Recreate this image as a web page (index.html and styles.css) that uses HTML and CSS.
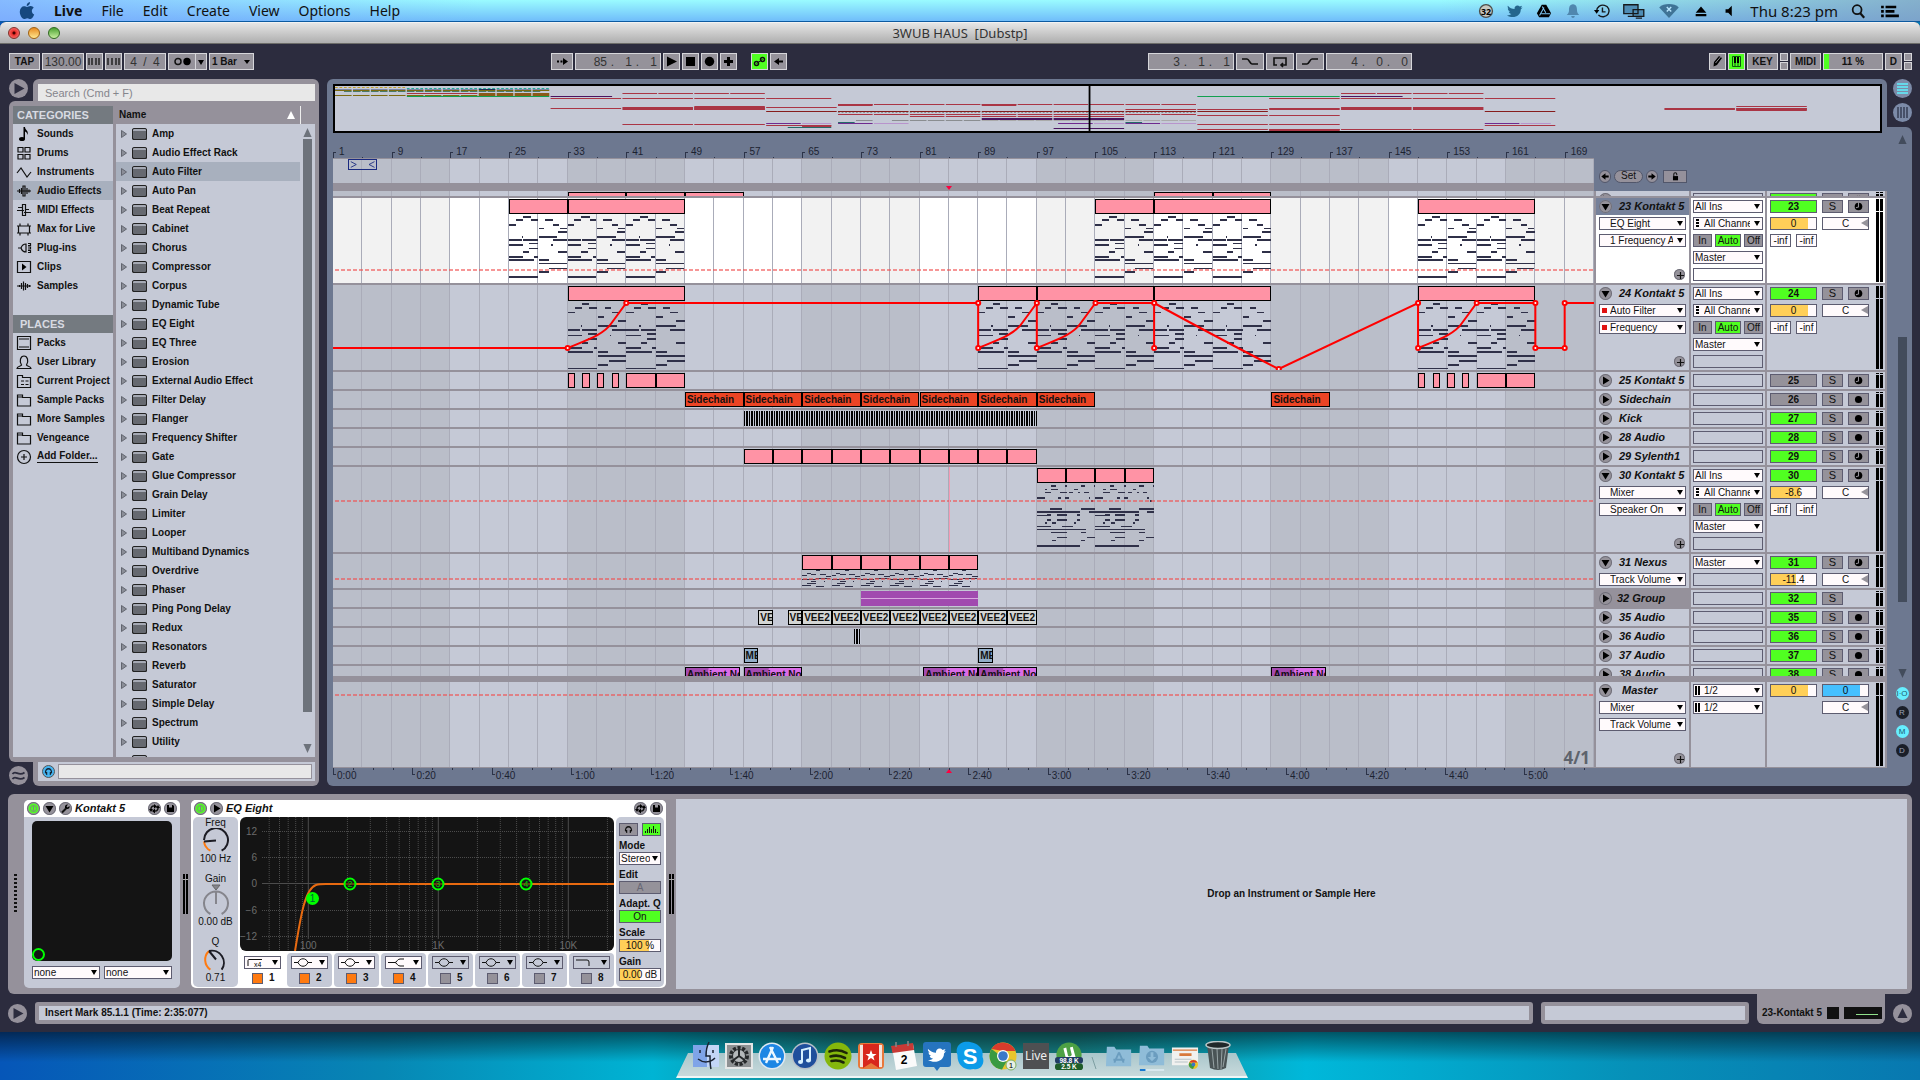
FILE: index.html
```html
<!DOCTYPE html>
<html lang="en">
<head>
<meta charset="utf-8">
<title>3WUB HAUS [Dubstp]</title>
<link rel="stylesheet" href="styles.css">
</head>
<body>
<svg class="defs" aria-hidden="true">
  <symbol id="i-note" viewBox="0 0 16 16"><ellipse cx="6" cy="13" rx="3" ry="2" /><path d="M7.500 1h1.500c0 3 4 3.500 2.500 8-.3-2-1-3-2.500-3.500V13H7.500z"/></symbol>
  <symbol id="i-drums" viewBox="0 0 16 16"><path class="ln" d="M2 2.500h5v4.500H2zM9 2.500h5v4.500H9zM2 9.500h5v4.500H2zM9 9.500h5v4.500H9z"/></symbol>
  <symbol id="i-wave" viewBox="0 0 16 16"><path class="ln" d="M1 9l4-5 6 9 4-5"/></symbol>
  <symbol id="i-audiofx" viewBox="0 0 16 16"><path class="ln" d="M1 8h14M3.500 6v4M5.500 5v6M7 3v10h2V3zM11 5v6M13 6.500v3"/></symbol>
  <symbol id="i-midifx" viewBox="0 0 16 16"><path class="ln" d="M2 5.500h5M1 8.500h7M8 10.500h7M9 7.500h4M6.500 2.500h3v11h-3z"/></symbol>
  <symbol id="i-max" viewBox="0 0 16 16"><path class="ln" d="M2.500 5h11v7h-11zM4 5V2.500M12 5V2.500M4 12v2.500M12 12v2.500M1 5h2M13 5h2M1 12h2M13 12h2"/></symbol>
  <symbol id="i-plug" viewBox="0 0 16 16"><path class="ln" d="M2 8h3M5 8c1-3 2-4 5-4v8c-3 0-4-1-5-4M12 3.500h2.500v2H12M12 7h2.500v2H12M12 10.500h2.500v2H12"/></symbol>
  <symbol id="i-clips" viewBox="0 0 16 16"><path class="ln" d="M1.500 2.500h13v11h-13z"/><path d="M6 4.500l4.500 3.500L6 11.500z"/></symbol>
  <symbol id="i-samples" viewBox="0 0 16 16"><path class="ln" d="M1 8h14M3.500 7v2M5.500 5v6M7.500 3.500v9M9.500 5v7M11.500 6v4M13.500 7v2"/></symbol>
  <symbol id="i-packs" viewBox="0 0 16 16"><path class="ln" d="M1.500 1.500h13v13h-13zM3 4h10M3 12h10"/></symbol>
  <symbol id="i-user" viewBox="0 0 16 16"><path class="ln" d="M1 14.500c0-2.500 4-2 4.500-3.500C3 7 4.500 2 8 2s5 5 2.500 9c.5 1.500 4.500 1 4.500 3.500z"/></symbol>
  <symbol id="i-project" viewBox="0 0 16 16"><path class="ln" d="M1.500 14.500V2.500h5v2h8v10zM5 8h3M5 11.500h3M9.500 8h3M9.500 11.500h3"/></symbol>
  <symbol id="i-folder" viewBox="0 0 16 16"><path class="ln" d="M1.500 14V3h5v2.500h8V14zM1.500 5h5"/></symbol>
  <symbol id="i-add" viewBox="0 0 16 16"><circle class="ln" cx="8" cy="8" r="6.500"/><path class="ln" d="M8 5v6M5 8h6"/></symbol>
  <symbol id="i-right" viewBox="0 0 13 13"><path d="M4 2.500l6.500 4-6.500 4z"/></symbol>
  <symbol id="i-down" viewBox="0 0 13 13"><path d="M2.500 4h8l-4 6.500z"/></symbol>
  <symbol id="i-swap" viewBox="0 0 13 13"><path d="M3 8C2.500 5 4.500 3.500 6.500 4M10 5c.5 3-1.500 4.500-3.500 4" fill="none" stroke="#111" stroke-width="1.500"/><path d="M6 2l3 2.500-3 2zM7 6.500v5L4 9zM1 7h4L3 10zM8 6h4l-2-3z"/></symbol>
  <symbol id="i-save" viewBox="0 0 13 13"><path d="M3 3h6l1 1v6H3z"/><path d="M5 3h3v2.500H5z" fill="#95929a"/></symbol>
  <symbol id="i-wrench" viewBox="0 0 13 13"><path d="M3 10.500l4-4" stroke="#111" stroke-width="2"/><path d="M6 6c-.5-2 1-4 3-3.500L7.500 4.500l1 1L10.500 4c.5 2-1 3.500-3 3z"/></symbol>
  <symbol id="i-power" viewBox="0 0 13 13"><circle cx="6.500" cy="6.500" r="5" fill="#4fff21"/><circle cx="6.500" cy="6.500" r="3" fill="none" stroke="#7a8f7a"/><path d="M6.500 4v5" stroke="#7a8f7a"/></symbol>
  <symbol id="i-tie" viewBox="0 0 13 13"><circle cx="6.500" cy="6.500" r="4.500"/><path d="M6.500 1v6l-3 1" fill="none" stroke="#95929a" stroke-width="1.300"/></symbol>
  <symbol id="i-phones" viewBox="0 0 13 13"><path d="M3 8.500C2 1.500 11 1.500 10 8.500" fill="none" stroke="currentColor" stroke-width="1.500"/><path d="M2.500 7h2.500v3.500H4zM8 7h2.500L9 10.500H8z" fill="currentColor"/></symbol>
</svg>

<nav class="menubar" aria-label="System menu">
  <div class="menus">
    <a class="apple" href="#" aria-label="Apple"><svg viewBox="0 0 16 18"><path fill="#16487f" d="M11 0c.2 2-1.500 4-3.300 4C7.500 2 9.200.3 11 0zM8 5c.8 0 2-1 3.700-.9 1.300.1 2.400.7 3 1.700-2.800 1.800-2.200 5.600.5 6.700C14.500 14.500 13 17 11.500 17c-1.300 0-1.700-.8-3.200-.8s-2 .8-3.200.8C3 17 .6 12.800.8 9.600 1 6.200 3 4.300 5 4.300 6.300 4.300 7.300 5 8 5z"/></svg></a>
    <a href="#" class="app">Live</a><a href="#">File</a><a href="#">Edit</a><a href="#">Create</a><a href="#">View</a><a href="#">Options</a><a href="#">Help</a>
  </div>
  <div class="extras">
    <svg viewBox="0 0 18 18"><circle cx="9" cy="9" r="8" fill="#4c4c48"/><circle cx="9" cy="9" r="6.500" fill="#c8c8c0"/><text x="9" y="13" text-anchor="middle" font-size="10" font-weight="bold">32</text></svg>
    <svg viewBox="0 0 18 18"><path fill="#25668c" d="M1 3c2 2.500 4.500 3.500 7.500 3.700C8 3.500 12 1.300 14.300 4L17 3l-1.500 2.500 2-.5-2 2.300C15.500 15 7 18 0 14c2 0 4-.5 5-1.500C3.500 12.300 2.200 11 2 9.800h1.500C1.800 9 .8 7.500 1 6l1.300.5C.8 5.500.3 4.200 1 3z"/></svg>
    <svg viewBox="0 0 18 18"><path d="M6.500 2h5l5.500 9.500-2.500 4.500h-11L1 11.500z"/><path d="M7 4l4 7M6 12h10M9 5l-5 9" stroke="#7ec6f2" stroke-width="1.200"/></svg>
    <svg viewBox="0 0 18 18"><path fill="#5087ae" d="M9 1.500c4 .5 4.500 3.500 4.500 7 0 2 1 3.500 2.500 5H2c1.500-1.500 2.500-3 2.500-5 0-3.500.5-6.500 4.500-7zM7 14.500h4c0 3-4 3-4 0z"/></svg>
    <svg viewBox="0 0 18 18"><path fill="none" stroke="#16191c" stroke-width="1.600" d="M3 9a7 6.500 0 1 1 2 4.500M9.500 5v5h3.500"/><path d="M0 8h6L3 12z"/></svg>
    <svg viewBox="0 0 26 18" class="wide"><path fill="#4f8db5" stroke="#16191c" stroke-width="1.500" d="M1.500 2h16v10h-16zM12 7.500h12v7.500H12z"/><path d="M6 15h6M15 17h7" stroke="#16191c" stroke-width="1.500"/></svg>
    <svg viewBox="0 0 22 18" class="wide"><path fill="#3f7396" d="M0 5c5-5 17-5 22 0L11 17z"/><path stroke="#b8e6ff" stroke-width="1.600" d="M8.500 4.500l5 5M13.500 4.500l-5 5"/></svg>
    <svg viewBox="0 0 18 18"><path d="M9 4l6 7H3zM3 12.500h12v2.500H3z"/></svg>
    <svg viewBox="0 0 18 18"><path d="M4 7h3l4-4v12l-4-4H4z"/></svg>
    <time>Thu 8:23 pm</time>
    <svg viewBox="0 0 18 18"><circle cx="8" cy="7.500" r="5" fill="none" stroke="#111" stroke-width="2"/><path d="M11 11l5 5.500" stroke="#111" stroke-width="2.500"/></svg>
    <svg viewBox="0 0 22 18" class="wide"><path d="M1 3h3v3H1zM6 3h12v3H6zM1 8h3v3H1zM6 8h10v3H6zM1 13h3v3H1zM6 13h15v3H6z"/></svg>
  </div>
</nav>

<main class="window">
  <header class="titlebar">
    <div class="lights"><button class="close" aria-label="Close"></button><button class="mini" aria-label="Minimize"></button><button class="full" aria-label="Zoom"></button></div>
    <h1>3WUB HAUS &nbsp;[Dubstp]</h1>
  </header>

  <div class="controlbar">
    <div class="cluster">
      <button class="btn w31">TAP</button>
      <button class="btn w42 num">130.00</button>
      <button class="btn" aria-label="Nudge down"><svg viewBox="0 0 15 15"><path d="M2 4v7M5 4v7M9 4v7M12 4v7" stroke="#111" stroke-width="1.300"/></svg></button>
      <button class="btn" aria-label="Nudge up"><svg viewBox="0 0 15 15"><path d="M2 4v7M6 4v7M10 4v7M13 4v7" stroke="#111" stroke-width="1.300"/></svg></button>
      <button class="btn w42 num sig"><span>4</span><span>/</span><span>4</span></button>
      <div class="joined"><button class="btn w28" aria-label="Metronome"><svg class="s24" viewBox="0 0 24 15"><circle cx="8" cy="7.500" r="3" fill="none" stroke="#111" stroke-width="1.500"/><circle cx="17" cy="7.500" r="3.700"/></svg></button><button class="btn w12" aria-label="Metronome options"><svg class="s8" viewBox="0 0 8 8"><path d="M1 2h6L4 7z"/></svg></button></div>
      <button class="btn w45">1 Bar<svg class="s8" viewBox="0 0 8 8"><path d="M1 2h6L4 6z"/></svg></button>
    </div>
    <div class="centre">
      <div class="cluster">
        <button class="btn w22" aria-label="Follow"><svg viewBox="0 0 15 15"><path d="M2 6.500h2v2H2zM5.500 6.500h2v2h-2zM8 4l5 3.500L8 11z"/></svg></button>
        <output class="btn pos"><span>85</span><i>.</i><span>1</span><i>.</i><span>1</span></output>
        <button class="btn" aria-label="Play"><svg viewBox="0 0 15 15"><path d="M3 2.500l10 5-10 5z"/></svg></button>
        <button class="btn" aria-label="Stop"><svg viewBox="0 0 15 15"><path d="M3 3h9v9H3z"/></svg></button>
        <button class="btn" aria-label="Record"><svg viewBox="0 0 15 15"><circle cx="7.500" cy="7.500" r="4.700"/></svg></button>
        <button class="btn" aria-label="Overdub"><svg viewBox="0 0 15 15"><path d="M6 3h3v3h3v3H9v3H6V9H3V6h3z"/></svg></button>
        <button class="btn on gapl" aria-label="Automation arm"><svg viewBox="0 0 15 15"><path d="M4.500 9.500l6-4" stroke="#111"/><circle cx="4.500" cy="9.500" r="2" fill="none" stroke="#111" stroke-width="1.500"/><circle cx="10.500" cy="5.500" r="2" fill="none" stroke="#111" stroke-width="1.500"/></svg></button>
        <button class="btn" aria-label="Back to arrangement"><svg viewBox="0 0 15 15"><path d="M3 7.500L8 4v2.500h4v2H8V11z"/></svg></button>
      </div>
      <div class="cluster">
        <output class="btn pos"><span>3</span><i>.</i><span>1</span><i>.</i><span>1</span></output>
        <button class="btn w28" aria-label="Punch in"><svg class="s24" viewBox="0 0 24 15"><path class="ln2" d="M4 5h5c2 0 3 5 5 5h6"/></svg></button>
        <button class="btn w28" aria-label="Loop"><svg class="s24" viewBox="0 0 24 15"><path class="ln2" d="M9 11H6V4h12v7h-5M15 9l-2 2 2 2"/></svg></button>
        <button class="btn w28" aria-label="Punch out"><svg class="s24" viewBox="0 0 24 15"><path class="ln2" d="M4 10h5c2 0 3-5 5-5h6"/></svg></button>
        <output class="btn pos"><span>4</span><i>.</i><span>0</span><i>.</i><span>0</span></output>
      </div>
    </div>
    <div class="cluster">
      <button class="btn" aria-label="Draw mode"><svg viewBox="0 0 15 15"><path d="M4 8l5-6 3 2-5 7-3.500 1.500z"/><path d="M5.500 9l5-6" stroke="#95929a"/></svg></button>
      <button class="btn on" aria-label="Computer keyboard"><svg viewBox="0 0 15 15"><path d="M3.500 2.500h8v10h-8zM6 2.500v10M9 2.500v10" fill="none" stroke="#115511"/><path d="M5 3h2v6H5zM8 3h2v6H8z"/></svg></button>
      <button class="btn w31">KEY</button>
      <span class="leds"><i></i><i></i></span>
      <button class="btn w31">MIDI</button>
      <span class="btn cpu">11 %</span>
      <button class="btn">D</button>
      <span class="leds"><i></i><i></i></span>
    </div>
  </div>

  <div class="workspace">
    <aside class="browser">
      <div class="tab top">
        <button class="round" aria-label="Hide browser"><svg viewBox="0 0 19 19"><path d="M5.500 4l10 5.500-10 5.500z"/></svg></button>
        <div class="tabbody"><input class="search" type="search" placeholder="Search (Cmd + F)" aria-label="Search"></div>
      </div>
      <div class="columns">
        <nav class="cats" aria-label="Categories">
          <h2>CATEGORIES</h2>
          <ul>
            <li><a href="#"><svg><use href="#i-note"/></svg>Sounds</a></li>
            <li><a href="#"><svg><use href="#i-drums"/></svg>Drums</a></li>
            <li><a href="#"><svg><use href="#i-wave"/></svg>Instruments</a></li>
            <li><a href="#" class="sel"><svg><use href="#i-audiofx"/></svg>Audio Effects</a></li>
            <li><a href="#"><svg><use href="#i-midifx"/></svg>MIDI Effects</a></li>
            <li><a href="#"><svg><use href="#i-max"/></svg>Max for Live</a></li>
            <li><a href="#"><svg><use href="#i-plug"/></svg>Plug-ins</a></li>
            <li><a href="#"><svg><use href="#i-clips"/></svg>Clips</a></li>
            <li><a href="#"><svg><use href="#i-samples"/></svg>Samples</a></li>
          </ul>
          <h2 class="places">PLACES</h2>
          <ul>
            <li><a href="#"><svg><use href="#i-packs"/></svg>Packs</a></li>
            <li><a href="#"><svg><use href="#i-user"/></svg>User Library</a></li>
            <li><a href="#"><svg><use href="#i-project"/></svg>Current Project</a></li>
            <li><a href="#"><svg><use href="#i-folder"/></svg>Sample Packs</a></li>
            <li><a href="#"><svg><use href="#i-folder"/></svg>More Samples</a></li>
            <li><a href="#"><svg><use href="#i-folder"/></svg>Vengeance</a></li>
            <li><a href="#"><svg><use href="#i-add"/></svg><span class="add">Add Folder...</span></a></li>
          </ul>
        </nav>
        <section class="files">
          <h2><span>Name</span><svg class="sort" viewBox="0 0 8 8"><path fill="#fff" d="M4 0l4 8H0z"/></svg></h2>
          <div class="filebody">
            <ul id="effects"></ul>
            <div class="scroll"><svg viewBox="0 0 9 10"><path d="M4.500 0L9 10H0z"/></svg><i></i><svg viewBox="0 0 9 10"><path d="M0 0h9L4.500 10z"/></svg></div>
          </div>
        </section>
      </div>
      <div class="tab bottom">
        <button class="round" aria-label="Groove pool"><svg viewBox="0 0 19 19"><path d="M3.500 8c3-4.500 6 3 12-1.500M3.500 13c3-4.500 6 3 12-1.500" fill="none" stroke="#2c2c3e" stroke-width="1.800"/></svg></button>
        <div class="tabbody"><div class="preview"><button class="cue" aria-label="Preview"><svg viewBox="0 0 13 13"><use href="#i-phones"/></svg></button><input aria-label="Preview waveform"></div></div>
      </div>
    </aside>

    <section class="arranger">
      <div class="stage">
        <svg id="overview" class="overview" viewBox="0 0 172 45" preserveAspectRatio="none"></svg>
        <div class="rulerrow">
          <div class="rulers">
            <div class="ruler" id="bars"></div>
            <div class="looplane striped"><div class="brace"><svg viewBox="0 0 30 11" preserveAspectRatio="none"><path d="M2 2l6 3.500-6 3.500M28 2l-6 3.500 6 3.500" fill="none" stroke="#1a2a80"/></svg></div></div>
            <div class="scrub"><i class="insert"></i></div>
          </div>
          <div class="locators">
            <button class="pill" aria-label="Previous locator"><svg viewBox="0 0 13 13"><path d="M2.500 6.500L7 3v2.500h3.500v2H7V10z"/></svg></button>
            <button class="pill set">Set</button>
            <button class="pill" aria-label="Next locator"><svg viewBox="0 0 13 13"><path d="M10.500 6.500L6 3v2.500H2.500v2H6V10z"/></svg></button>
            <button class="lock" aria-label="Lock envelopes"><svg viewBox="0 0 13 13"><path d="M3.500 6h6v5h-6z"/><path d="M4.500 6V3.500c0-2 3.500-2 3.500 0V5" fill="none" stroke="#111" stroke-width="1.200"/></svg></button>
          </div>
        </div>
        <div id="tracks" class="tracks"></div>
        <div class="ruler time" id="seconds"></div>
      </div>
      <div class="side">
        <div class="views">
          <button class="round cyan" aria-label="Arrangement view"><svg viewBox="0 0 19 19"><path d="M4 5h11M4 8h11M4 11h11M4 14h11" stroke="#5ff2ff" stroke-width="1.600"/></svg></button>
          <button class="round cyan" aria-label="Session view"><svg viewBox="0 0 19 19"><path d="M5 4v11M8 4v11M11 4v11M14 4v11" stroke="#2c3348" stroke-width="1.300"/></svg></button>
        </div>
        <div class="rail">
          <svg viewBox="0 0 9 10"><path d="M4.500 0L9 10H0z"/></svg>
          <i class="thumb"></i>
          <svg viewBox="0 0 9 10"><path d="M0 0h9L4.500 10z"/></svg>
          <button class="opt lit">I·O</button><button class="opt">R</button><button class="opt lit">M</button><button class="opt">D</button>
        </div>
      </div>
    </section>
  </div>

  <section class="detail">
    <div class="drag"></div>
    <article class="device kontakt">
      <header><svg class="dot"><use href="#i-power"/></svg><svg class="dot"><use href="#i-down"/></svg><svg class="dot"><use href="#i-wrench"/></svg><h3>Kontakt 5</h3><svg class="dot"><use href="#i-swap"/></svg><svg class="dot"><use href="#i-save"/></svg></header>
      <div class="pad"><i></i></div>
      <div class="pair"><span class="pick"><select aria-label="X axis"><option>none</option></select></span><span class="pick"><select aria-label="Y axis"><option>none</option></select></span></div>
    </article>
    <div class="vu"></div>
    <article class="device eq">
      <header><svg class="dot"><use href="#i-power"/></svg><svg class="dot"><use href="#i-right"/></svg><h3>EQ Eight</h3><svg class="dot"><use href="#i-swap"/></svg><svg class="dot"><use href="#i-save"/></svg></header>
      <div class="eqbody">
        <div class="knobs">
          <div>Freq<svg viewBox="0 0 32 25"><path d="M10.400 22.700A12 12 0 0 1 4 13.500" class="amt"/><path d="M4 12a12 12 0 1 1 17.600 10.700M16 12.500L4 13.500" class="arc"/></svg>100 Hz</div>
          <div>Gain<svg viewBox="0 0 32 32" class="tall"><path d="M12 1h8l-4 5z" fill="#85858c" stroke="#666"/><path d="M10.400 30A12 12 0 1 1 21.600 30M16 7v13" class="arc off"/></svg>0.00 dB</div>
          <div>Q<svg viewBox="0 0 32 25"><path d="M10.400 22.700A12 12 0 0 1 9 4" class="amt"/><path d="M9 4a12 12 0 0 1 12.600 18.700M16 12.500L9 4" class="arc"/></svg>0.71</div>
        </div>
        <div class="eqmid">
          <svg id="curve" class="curve" viewBox="0 0 374 134"></svg>
          <div class="bands" id="bands"></div>
        </div>
        <div class="eqside">
          <div class="duo"><button class="mini-btn" aria-label="Audition"><svg viewBox="0 0 13 13"><use href="#i-phones"/></svg></button><button class="mini-btn on" aria-label="Analyze"><svg viewBox="0 0 17 11"><path d="M2.500 9V7M4.500 9V5M6.500 9V3M8.500 9V5M10.500 9V2M12.500 9V5M14.500 9V8" stroke="#111"/></svg></button></div>
          <label>Mode<span class="pick"><select><option>Stereo</option></select></span></label>
          <label>Edit<button class="mini-btn dim">A</button></label>
          <label>Adapt. Q<button class="mini-btn on">On</button></label>
          <label>Scale<input class="val" style="--fill:73%" value="100 %"></label>
          <label>Gain<input class="val" style="--fill:50%" value="0.00 dB"></label>
        </div>
      </div>
    </article>
    <div class="vu"></div>
    <div class="drop">Drop an Instrument or Sample Here</div>
  </section>

  <footer class="status">
    <button class="round" aria-label="Help view"><svg viewBox="0 0 19 19"><path d="M5.500 4l10 5.500-10 5.500z"/></svg></button>
    <div class="field msg">Insert Mark 85.1.1 (Time: 2:35:077)</div>
    <div class="field cliptab"></div>
    <div class="current">23-Kontakt 5<i class="thumb1"></i><i class="thumb2"></i></div>
    <button class="round" aria-label="Hide detail"><svg viewBox="0 0 19 19"><path d="M9.500 4l5 10h-10z"/></svg></button>
  </footer>
</main>

<nav class="dock" aria-label="Dock">
  <div class="shelf">
    <svg viewBox="0 0 28 30"><path fill="#7fa4e8" d="M1 4h26v22H1z"/><path fill="#c3d6f7" d="M15 4h12v22H15z"/><path d="M17 1c-3 6-3 9-3 14h4c0 5 0 9 1 13M8 9v3M21 9v3M6 18c5 4 12 4 17-1" fill="none" stroke="#1b2333" stroke-width="1.500"/></svg>
    <svg viewBox="0 0 28 30"><path fill="#8e9193" stroke="#e4e6e6" stroke-width="2" d="M1 3h26v24H1z"/><circle cx="14" cy="15" r="8" fill="none" stroke="#26282a" stroke-width="4" stroke-dasharray="3 1.500"/><circle cx="14" cy="15" r="6.500" fill="#b5b8ba" stroke="#26282a"/><path d="M14 15V8.500M14 15l5.500 4M14 15l-5.500 4" stroke="#26282a" stroke-width="2"/></svg>
    <svg viewBox="0 0 28 30"><circle cx="14" cy="15" r="13.500" fill="#dfe9f2"/><circle cx="14" cy="15" r="12" fill="#1d86e4"/><path d="M15 6L8 22M12 6l8 16M5 18h18" stroke="#eaf6ff" stroke-width="2.400"/></svg>
    <svg viewBox="0 0 28 30"><circle cx="14" cy="15" r="13.500" fill="#b7c0c8"/><circle cx="14" cy="15" r="12" fill="#1f4f9c"/><path d="M11 21V9l8-2v12" fill="none" stroke="#d7f0ff" stroke-width="2"/><ellipse cx="9.500" cy="21" rx="2.500" ry="2" fill="#d7f0ff"/><ellipse cx="17.500" cy="19.500" rx="2.500" ry="2" fill="#d7f0ff"/></svg>
    <svg viewBox="0 0 28 30"><circle cx="14" cy="15" r="13.500" fill="#85b70c"/><path d="M5.500 10.500c6-2 12-1.500 17 1.500M6.500 15.500c5-1.500 10-1 14.500 1.500M7.500 20c4-1 8-.8 12 1.500" fill="none" stroke="#1d2607" stroke-width="2.600" stroke-linecap="round"/></svg>
    <svg viewBox="0 0 28 30"><rect x="1" y="2" width="26" height="26" rx="4" fill="#e8783b"/><path fill="#d8261c" d="M6 3h16v24l-8-5-8 5z"/><path fill="#f4e3dc" d="M3 4h3v22H3zM22 4h3v22h-3z"/><path fill="#fff" d="M14 9l1.500 4h4l-3.200 2.500 1.200 4L14 17l-3.500 2.500 1.200-4L8.500 13h4z"/></svg>
    <svg viewBox="0 0 28 30"><path fill="#fafafa" d="M2 6l21-3 4 22-21 4z"/><path fill="#c83a36" d="M1 5l22-3 1 7L2.500 12z"/><path d="M6 1v5M18 0v5" stroke="#888" stroke-width="1.500"/><text x="14" y="23" text-anchor="middle" font-size="12" font-weight="bold">2</text></svg>
    <svg viewBox="0 0 28 30"><path fill="#2674bf" d="M3 1h22q3 0 3 3v19q0 3-3 3h-8l-3 4-3-4H3q-3 0-3-3V4q0-3 3-3z"/><path fill="#fff" d="M5 8c2.500 2.500 5 3.500 8 3.700C12.500 8 17 6 19.500 9l3-1-1.500 2.500 2-.3-2 2.200C21 20 12 23 5 19c2 0 4-.5 5-1.500-2-.3-3-1-3.300-2.500h1.500C6.500 14 5.500 13 5.600 11.200l1.300.4C5.500 10.500 4.500 9.500 5 8z"/></svg>
    <svg viewBox="0 0 28 30"><path fill="#0c9be8" d="M8 1c4-1 14 0 18 8 1 3 .5 5 .5 7 3 6-2 14-9 12C9 30 1 24 1.500 14-1 9 2 2 8 1z"/><text x="14" y="23" text-anchor="middle" font-size="22" font-weight="bold" fill="#fff">S</text></svg>
    <svg viewBox="0 0 28 30"><circle cx="14" cy="15" r="13.500" fill="#e9c52c"/><path fill="#d93c2c" d="M2.500 8A13.500 13.500 0 0 1 26.500 10H14z"/><path fill="#3a9a42" d="M2.500 8A13.500 13.500 0 0 0 13 28.500l5-9z"/><circle cx="14" cy="15" r="6" fill="#fff"/><circle cx="14" cy="15" r="4.800" fill="#3b78c8"/><circle cx="22" cy="24" r="5" fill="#e8efe4" stroke="#7fae62"/><text x="22" y="27" text-anchor="middle" font-size="8">1</text></svg>
    <svg viewBox="0 0 28 30"><path fill="#4e5052" d="M1 2h26v26H1z"/><text x="14" y="19" text-anchor="middle" font-size="12" fill="#eee" class="noto">Live</text></svg>
    <svg viewBox="0 0 30 30"><circle cx="15" cy="14" r="13.500" fill="#4da144"/><path fill="#fff" d="M9 7l3-1 2 9c2 1 3 0 4-1L16 6l3-1 3 11-10 3z"/><rect y="16" width="30" height="7" rx="3" fill="#223d63"/><rect y="23" width="30" height="7" rx="3" fill="#1f5d2a"/><text x="15" y="22" text-anchor="middle" font-size="7" font-weight="bold" fill="#fff">98.8 K</text><text x="15" y="29" text-anchor="middle" font-size="7" font-weight="bold" fill="#fff">2.5 K</text></svg>
    <svg viewBox="0 0 12 30" class="rule"><path d="M4 16l4 12" stroke="#7d9ea2"/></svg>
    <svg viewBox="0 0 30 30"><path fill="#8fbcd8" d="M2 5h8l2 3h16v18H1z"/><path d="M15 11l-5 11M15 11l5 11M9 19h12" stroke="#6b9dbf" stroke-width="2" fill="none"/></svg>
    <svg viewBox="0 0 30 32"><path fill="#8fbcd8" d="M2 5h8l2 3h16v18H1z"/><circle cx="15" cy="17" r="6.500" fill="#6b9dbf"/><path fill="#8fbcd8" d="M13.500 12h3v5h3L15 21.500 10.500 17h3z"/><path fill="#d8e8ee" d="M2 30h26v2H2z"/><path fill="#1878d0" d="M2 30h6v2H2z"/></svg>
    <svg viewBox="0 0 30 30"><path fill="#f1f1ef" d="M1 6h28v19H1z"/><path fill="#d8793c" d="M2 8h26v1.500H2zM9 12h13v3H9z"/><path fill="#b8c4c8" d="M4 18h18v1H4zM4 21h14v1H4z"/><circle cx="24" cy="24" r="5" fill="#e9c52c"/><path fill="#d93c2c" d="M19.500 22a5 5 0 0 1 9 0z"/><path fill="#3a9a42" d="M19.500 22a5 5 0 0 0 4 7l2-4z"/><circle cx="24" cy="24" r="2" fill="#3b78c8"/></svg>
    <svg viewBox="0 0 28 30"><path fill="#4a5456" d="M3 4h22l-3 23q-8 4-16 0z"/><path d="M8 8l2 19M13 8l1 20M18 8l-1 20M22 8l-3 18" stroke="#98a4a6"/><ellipse cx="14" cy="4" rx="12" ry="3.500" fill="#20282a" stroke="#b9c6c8" stroke-width="1.500"/></svg>
  </div>
</nav>
<script src="app.js"></script>
</body>
</html>
```
FILE: styles.css
```css
:root {
  --night: #2c2c3e;
  --frame: #95919b;
  --slate: #6d7890;
  --pale: #c5c9d6;
  --pale2: #babec9;
  --edge: #5d5c70;
  --lime: #50ff21;
  --paper: #fffafc;
  --bar: calc(100% / 43);
  --stripe: calc(400% / 43);
}
* { box-sizing: border-box; }
body {
  margin: 0;
  min-height: 100vh;
  display: flex;
  flex-direction: column;
  font: 10px/12px "Liberation Sans", Arial, sans-serif;
  color: #111;
  background: linear-gradient(90deg, #0656b8 0, #0787b4 20%, #00b4d4 34%, #16868c 44%, #16868c 56%, #00b8da 68%, #0690b8 85%, #0878b0);
}
button, input, select { font: inherit; color: inherit; padding: 0; margin: 0; border: 0; border-radius: 0; background: none; }
h1, h2, h3, ul { margin: 0; padding: 0; font-size: inherit; list-style: none; }
a { color: inherit; text-decoration: none; }
svg { display: block; flex: none; }
.defs { display: none; }
.ln { fill: none; stroke: #111; stroke-width: 1.2; }
.ln2 { fill: none; stroke: #111; stroke-width: 1.6; }
.noto { font-family: "Noto Sans", sans-serif; }

/* system menu */
.menubar {
  display: flex; justify-content: space-between; align-items: center;
  height: 22px; padding: 0 18px 0 19px;
  font: 14px/20px "Noto Sans", sans-serif;
  border-bottom: 1px solid #0d5aa0;
  background: linear-gradient(90deg, #80aaffcc, #80aaff00 25%, #80aaff00 75%, #7f9dbfcc), linear-gradient(#9afbff, #70bdfa);
}
.menus, .extras { display: flex; align-items: center; }
.menus { gap: 19px; }
.menus .app { font-weight: bold; }
.apple svg { width: 16px; height: 18px; }
.extras { gap: 11px; }
.extras time { font-size: 15px; }
.extras svg { width: 18px; height: 16px; }
.extras .wide { width: 24px; }

/* window */
.window { background: var(--night); display: flex; flex-direction: column; border-radius: 6px 6px 0 0; padding-bottom: 8px; }
.titlebar {
  display: grid; grid-template-columns: 60px 1fr 60px; align-items: center;
  height: 22px; padding: 0 8px; border-radius: 6px 6px 0 0;
  background: linear-gradient(#e6e6e6, #aeaeae); border-top: 1px solid #f2f2f2; border-bottom: 1px solid #6c6c68;
}
.titlebar h1 { font: 13px/20px "Noto Sans", sans-serif; color: #333; text-align: center; }
.lights { display: flex; gap: 8px; }
.lights button { width: 12px; height: 12px; border-radius: 50%; border: 1px solid #803028; }
.close { background: radial-gradient(#400 0 1px, #e8302a 2px, #f88); }
.lights .mini { background: linear-gradient(#e88a20, #ffe890); border-color: #a06010; }
.lights .full { background: linear-gradient(#4aa030, #c8f0a0); border-color: #306820; }

.controlbar { display: flex; justify-content: space-between; padding: 9px 8px 9px 9px; }
.cluster { display: flex; gap: 2px; }
.centre { display: flex; gap: 18.8vw; }
.btn {
  display: flex; align-items: center; justify-content: center;
  width: 17px; height: 17px; border: 1px solid #d6d6da; background: #95929a; font-weight: bold;
}
.btn svg { width: 15px; height: 15px; }
.btn .s8 { width: 8px; height: 8px; }
.btn .s24 { width: 24px; }
.btn.on { background: var(--lime); }
.w12 { width: 12px; } .w22 { width: 22px; } .w28 { width: 28px; } .w31 { width: 31px; } .w42 { width: 42px; }
.w45 { width: 45px; gap: 6px; }
.joined { display: flex; }
.joined .w12 { border-left: 0; width: 11px; }
.num, .pos { font-size: 12px; font-weight: normal; color: #333; }
.sig { justify-content: space-around; padding: 0 2px; }
.pos { width: 86px; justify-content: flex-end; padding-right: 3px; }
.pos span { width: 18px; text-align: right; }
.pos i { width: 7px; text-align: right; font-style: normal; }
.gapl { margin-left: 12px; }
.leds { display: flex; flex-direction: column; gap: 1px; width: 8px; }
.leds i { flex: 1; border: 1px solid #d6d6da; background: #95929a; }
.cpu { width: 60px; background: linear-gradient(90deg, var(--lime) 5px, #95929a 5px); }

.workspace { display: grid; grid-template-columns: 310px 1fr; gap: 8px; padding: 0 8px 0 9px; }

/* browser */
.browser { display: flex; flex-direction: column; }
.tab { display: flex; }
.round { width: 19px; height: 19px; border-radius: 50%; background: var(--frame); flex: none; }
.round svg { width: 19px; height: 19px; fill: var(--night); }
.tab .round { margin-right: 5px; }
.top .tabbody { flex: 1; background: var(--frame); border-radius: 6px 6px 0 0; padding: 5px 4px 0 5px; }
.bottom .tabbody { flex: 1; background: var(--frame); border-radius: 0 0 6px 6px; padding: 0 4px 5px 5px; }
.bottom { align-items: flex-end; }
.bottom .round { margin-bottom: 1px; }
.search { display: block; width: 100%; height: 17px; padding: 0 7px; background: #e8e8e8; font-size: 11px; appearance: none; }
.search::placeholder { color: #85858c; opacity: 1; }
.columns { flex: 1; display: grid; grid-template-columns: 100px 1fr; gap: 3px; background: var(--frame); padding: 5px 4px; border-radius: 6px 0 0 6px; }
.cats { background: var(--pale); }
.cats h2 { height: 18px; line-height: 18px; padding-left: 4px; background: #747a80; color: #d8dae2; font-size: 11px; font-weight: bold; }
.cats .places { margin-top: 20px; padding-left: 7px; }
.cats a { display: flex; align-items: center; gap: 5px; height: 19px; padding-left: 3px; font-weight: bold; white-space: nowrap; }
.cats svg { width: 16px; height: 16px; }
.cats .sel, .files .sel { background: #a8b0be; }
.add { border-bottom: 1px solid #111; }
.files { display: flex; flex-direction: column; }
.files h2 { display: flex; justify-content: space-between; align-items: center; height: 18px; padding-left: 3px; margin-right: 14px; border-right: 1px solid #eee; }
.sort { width: 8px; height: 8px; margin-right: 5px; }
.filebody { flex: 1; display: flex; background: var(--pale); contain: size; overflow: hidden; }
.filebody ul { flex: 1; overflow: hidden; }
.filebody li { display: flex; align-items: center; gap: 5px; height: 19px; padding-left: 5px; font-weight: bold; }
.filebody li .tri { width: 6px; height: 8px; fill: #8b8e98; stroke: #62656f; }
.filebody li .box { width: 15px; height: 12px; border: 1px solid #222; border-top: 3px solid #a5a9b4; outline: 1px solid #222; outline-offset: -1px; background: #666970; border-radius: 2px; }
.scroll { width: 15px; padding: 4px 3px; display: flex; flex-direction: column; align-items: center; gap: 2px; }
.scroll svg { width: 9px; height: 9px; fill: #6d727b; }
.scroll i { width: 9px; flex: 1; background: #6d727b; margin-bottom: 30px; }
.preview { display: flex; gap: 3px; align-items: center; height: 19px; padding: 2px 3px 2px 4px; background: var(--pale); }
.cue { width: 13px; height: 13px; border-radius: 50%; background: #46b4f0; border: 1px solid #555; color: #123; }
.cue svg { width: 11px; height: 11px; }
.preview input { flex: 1; height: 15px; border: 1px solid var(--frame); background: #e8e8e8; }

/* arranger */
.arranger { display: grid; grid-template-columns: 1fr 25px; }
.stage { background: var(--slate); border-radius: 6px 6px 0 6px; padding: 5px 0 0 6px; min-width: 0; }
.overview { width: calc(100% - 5px); height: 49px; border: 2px solid #000; background: var(--pale); }
.rulerrow { display: grid; grid-template-columns: 1fr 291px; gap: 2px; }
.ruler { position: relative; height: 25px; overflow: hidden; color: #1c2230; }
.ruler span { position: absolute; bottom: 0; height: 6px; border-left: 1px solid #2c3348; padding-left: 5px; line-height: 0; white-space: nowrap; }
.ruler span::before { content: ""; position: absolute; left: 0; top: 0; width: 2px; border-top: 1px solid #2c3348; }
.ruler i { position: absolute; bottom: 0; width: 1px; height: 1px; background: #2c3348; }
.striped {
  background:
    repeating-linear-gradient(90deg, #0000 0 calc(var(--bar) - 1px), #aaacb9 calc(var(--bar) - 1px) var(--bar)),
    repeating-linear-gradient(90deg, var(--pale2) 0 var(--stripe), var(--pale) var(--stripe) calc(2 * var(--stripe)));
}
.looplane { height: 25px; border-top: 1px solid var(--frame); position: relative; }
.brace { position: absolute; top: 0; left: calc(200% / 172); width: calc(400% / 172); height: 11px; border: 1px solid #1a2a80; }
.brace svg { width: 100%; height: 100%; }
.scrub { height: 8px; background: var(--frame); position: relative; }
.insert { position: absolute; left: calc(8400% / 172); margin-left: -3px; top: 3px; border: 3px solid #0000; border-top: 4px solid #ff0040; border-bottom: 0; }
.time .insert { top: 1px; border-top: 0; border-bottom: 4px solid #ff0040; width: auto; height: auto; background: none; bottom: auto; }
.locators { display: flex; align-items: center; gap: 3px; padding: 36px 0 0 3px; height: 50px; }
.pill { height: 13px; width: 12px; border-radius: 7px; background: var(--frame); border: 1px solid #51566a; display: flex; align-items: center; justify-content: center; }
.pill svg { width: 12px; height: 13px; }
.set { width: 29px; }
.lock { width: 24px; height: 13px; margin-left: 2px; background: var(--frame); border: 1px solid #51566a; display: flex; justify-content: center; }
.lock svg { width: 11px; height: 11px; }

.tracks { background: var(--frame); display: flex; flex-direction: column; gap: 2px; padding-bottom: 1px; }
.track { display: grid; grid-template-columns: minmax(0, 1fr) 93px 74px 118px; gap: 2px; padding-right: 2px; height: 17px; overflow: hidden; }
.track > div { background: var(--pale); overflow: hidden; }
.track.tall { height: 85px; }
.track.mid { height: 34px; }
.track.sliver { height: 5px; align-items: end; }
.track.sliver > div { height: 17px; }
.track.cut { height: 10px; }
.track.cut > div { height: 17px; }
.track.master { margin-top: 4px; }
.track > .lane { position: relative; }
.track > .striped {
  background:
    repeating-linear-gradient(90deg, #0000 0 calc(var(--bar) - 1px), #aaacb9 calc(var(--bar) - 1px) var(--bar)),
    repeating-linear-gradient(90deg, var(--pale2) 0 var(--stripe), var(--pale) var(--stripe) calc(2 * var(--stripe)));
}
.track.hot { --pale: #fff; }
.track.hot > .striped { --pale2: #f2f2f2; }
.track.hot .name header { background: #76819a; }
.track.group .name { background: var(--frame); }
.lane svg { position: absolute; inset: 0; width: 100%; height: 100%; shape-rendering: crispEdges; }
.lane svg.auto { shape-rendering: auto; }
.auto path { fill: none; vector-effect: non-scaling-stroke; stroke-linecap: round; }
.clip { position: absolute; top: 1px; height: 15px; border: 1px solid #000; overflow: hidden; padding-left: 1px; line-height: 14px; font-weight: bold; white-space: nowrap; }
.pink { background: #ff93a5; }
.orange { background: #ec4424; }
.grey { background: #d4d6d4; }
.blue { background: #93aec8; }
.violet { background: linear-gradient(100deg, #a44ab0 40%, #db6ce8 42%); }
.plum { background: linear-gradient(#a14aaf 7px, #d8a8e0 7px 8px, #a14aaf 8px); border: 0; }
.kick { border: 0; background: repeating-linear-gradient(90deg, #000 0 1px, #c5c9d6 1px 2px, #000 2px 4px, #c5c9d6 4px 5px); }
.dash { position: absolute; left: 2px; right: 0; height: 2px; background: repeating-linear-gradient(90deg, #f0505099 0 4px, #0000 4px 6px); }
.cursor { position: absolute; top: 0; bottom: 0; left: calc(8400% / 172); width: 1px; background: #f49ab4; }
.zoomlevel { position: absolute; right: 4px; bottom: 0; font: bold 17px/18px "Noto Sans", sans-serif; color: #5e636c; }

.name { display: flex; flex-direction: column; gap: 4px; }
.name header { display: flex; align-items: center; gap: 7px; height: 17px; padding-left: 3px; font: italic bold 11px/17px "Liberation Sans", sans-serif; white-space: nowrap; margin-bottom: -2px; flex: none; }
.group .name header { gap: 5px; }
.master .name header { gap: 10px; }
.name .pick { margin: 0 3px; }
.dot { width: 13px; height: 13px; border-radius: 50%; background: #95929a; box-shadow: inset 0 0 0 1px #6e6d78; flex: none; }
button.dot svg { width: 13px; height: 13px; }
.plus { margin: auto 4px 3px auto; width: 11px; height: 11px; }
.plus svg { width: 11px; height: 11px; }
.pick { position: relative; display: block; height: 13px; flex: none; }
.pick select { display: block; width: 100%; height: 13px; padding: 0 12px 0 1px; border: 1px solid var(--edge); background: var(--paper); appearance: none; overflow: hidden; }
.pick::after { content: ""; position: absolute; right: 3px; top: 4px; border: 3px solid #0000; border-top: 5px solid #000; border-bottom: 0; }
.name .pick select { padding-left: 10px; }
.name .armed::before { content: ""; position: absolute; left: 3px; top: 4px; width: 5px; height: 5px; background: #e01010; }
.io { display: flex; flex-direction: column; gap: 4px; padding: 2px; }
.io .chan select { padding-left: 10px; }
.io .chan::before { content: ""; position: absolute; left: 3px; top: 2px; width: 3px; height: 9px; background: repeating-linear-gradient(#000 0 2px, #0000 2px 3px); }
.io .out::before { content: ""; position: absolute; left: 2px; top: 2px; width: 5px; height: 9px; background: linear-gradient(90deg, #000 2px, #0000 2px 3px, #000 3px); }
.io .out select { padding-left: 10px; }
.monitor { display: grid; grid-template-columns: 19px 26px 19px; gap: 3px; flex: none; }
.monitor button, .mix button { height: 13px; border: 1px solid var(--edge); background: #95929a; line-height: 11px; }
.monitor .lit, .mix .act.lit { background: var(--lime); }
.blank { height: 13px; border: 1px solid var(--edge); flex: none; }
.mix { display: flex; gap: 7px; padding: 2px 2px 0 3px; }
.mixgrid { display: grid; grid-template-columns: repeat(4, 21px); grid-auto-rows: 13px; gap: 4px 5px; }
.mix .act { grid-column: span 2; font-weight: bold; }
.mix .solo { font-size: 11px; }
.mix button svg { width: 11px; height: 11px; margin: auto; }
.val { display: block; width: 100%; height: 13px; border: 1px solid var(--edge); text-align: center; background: linear-gradient(90deg, var(--tint, #ffcf58) var(--fill), var(--paper) var(--fill)); }
.mix .val { grid-column: span 2; }
.spacer { grid-column: span 2; }
.panwrap { grid-column: span 2; position: relative; }
.panwrap .val { background: var(--paper); }
.panwrap::after { content: ""; position: absolute; right: 1px; top: 2px; border: 4px solid #0000; border-right: 7px solid #95929a; border-left: 0; }
.peak { border: 1px solid var(--edge); background: var(--paper); text-align: center; line-height: 11px; }
.level { width: 7px; margin: -1px 0 1px; background: linear-gradient(var(--pale) 0 0) 0 var(--gap, 1px) / 100% 1px no-repeat, linear-gradient(90deg, #000 3px, var(--pale) 3px 4px, #000 4px); }
.tall .level, .mid .level { --gap: 12px; }

.time { height: 18px; margin-right: 293px; }
.time span { top: 0; bottom: auto; height: 7px; line-height: 15px; padding-left: 3px; }
.time span::before { top: 6px; }
.time i { top: 0; bottom: auto; height: 2px; }

.side { display: flex; flex-direction: column; }
.views { display: flex; flex-direction: column; gap: 5px; padding-left: 6px; height: 48px; }
.cyan { background: #7c8ba8; }
.rail { flex: 1; display: flex; flex-direction: column; align-items: center; background: var(--slate); border-radius: 0 6px 6px 0; padding: 8px 0 29px 5px; }
.rail > svg { width: 9px; height: 9px; fill: #434c5c; }
.thumb { width: 9px; flex: 1; max-height: 265px; margin: 193px 0 auto; background: #434c5c; }
.opt { width: 13px; height: 13px; margin-top: 6px; border-radius: 50%; background: #1a1e28; color: #9aa4b8; font-size: 8px; line-height: 13px; }
.rail > svg + .opt { margin-top: 9px; }
.opt.lit { background: #66eeff; color: #1d5a70; }

/* device view */
.detail { display: flex; align-items: flex-start; height: 200px; margin: 8px; padding: 6px 5px 5px 6px; background: var(--frame); border-radius: 6px; }
.drag { width: 3px; height: 40px; margin: 74px 7px 0 0; background: repeating-linear-gradient(#111 0 2px, #0000 2px 4px); }
.device { height: 188px; border-radius: 5px; background: var(--pale); overflow: hidden; flex: none; }
.device header { display: flex; align-items: center; gap: 3px; height: 17px; padding: 0 3px; background: #fff; }
.device h3 { flex: 1; font: italic bold 11px/17px "Liberation Sans", sans-serif; }
.kontakt { width: 156px; }
.pad { height: 140px; margin: 4px 8px 5px; border-radius: 5px; background: #141414; display: flex; align-items: flex-end; }
.pad i { width: 13px; height: 13px; border: 2px solid #0f0; border-radius: 50%; }
.pair { display: grid; grid-template-columns: 1fr 1fr; gap: 4px; margin: 0 8px; }
.vu { width: 5px; height: 40px; margin: 74px 3px 0; background: linear-gradient(#aaa 0 0) 0 5px / 100% 1px no-repeat, linear-gradient(90deg, #000 2px, #0000 2px 3px, #000 3px); }
.eq { width: 475px; background: #fff; }
.eqbody { display: grid; grid-template-columns: 45px 1fr 48px; gap: 2px; padding: 0 2px; height: 169px; }
.knobs, .eqside { background: var(--pale); border-radius: 5px; }
.knobs { display: flex; flex-direction: column; justify-content: space-between; padding: 0 0 4px; line-height: 11px; text-align: center; }
.knobs svg { width: 32px; height: 25px; margin: 0 auto; }
.knobs .tall { height: 32px; }
.arc { fill: none; stroke: #1c1c24; stroke-width: 2; }
.arc.off { stroke: #85858c; }
.amt { fill: none; stroke: #ff7a10; stroke-width: 2; }
.eqmid { display: flex; flex-direction: column; gap: 2px; }
.curve { width: 374px; height: 134px; border-radius: 6px; background: #141414; }
.curve text { fill: #6c6c6c; font-size: 10px; }
.bands { flex: 1; display: grid; grid-template-columns: repeat(8, 1fr); gap: 2px; }
.band { background: var(--pale); border-radius: 4px; padding: 3px 4px; }
.band.first { background: #fff; }
.band .pick svg { position: absolute; left: 2px; top: 1px; width: 20px; height: 11px; }
.band.idle select { background: var(--pale); }
.band label { display: flex; align-items: center; gap: 6px; margin: 3px 0 0 8px; font-weight: bold; }
.band input { appearance: none; width: 11px; height: 11px; border: 1px solid var(--edge); background: #95929a; }
.band input:checked { background: #ff7a10; }
.eqside { padding: 6px 3px; font-weight: bold; display: flex; flex-direction: column; justify-content: space-between; }
.eqside .duo { display: flex; justify-content: space-between; }
.duo .mini-btn { width: 19px; }
.mini-btn { display: block; width: 100%; height: 13px; border: 1px solid var(--edge); background: #95929a; line-height: 11px; }
.mini-btn svg { height: 11px; width: 100%; }
.mini-btn.on { background: var(--lime); }
.mini-btn.dim { color: #666674; }
.eqside label { display: block; }
.eqside label > * { font-weight: normal; }
.eqside .pick select { padding: 0 10px 0 1px; }
.drop { flex: 1; align-self: stretch; margin: -1px 0 0 -1px; background: var(--pale); display: flex; align-items: center; justify-content: center; font-weight: bold; }

.status { display: flex; align-items: center; gap: 8px; height: 22px; padding: 0 8px; }
.field { height: 22px; border: 4px solid var(--frame); background: var(--pale); border-radius: 3px; font-weight: bold; line-height: 14px; padding-left: 6px; }
.msg { flex: 1; }
.cliptab { width: 208px; }
.current { display: flex; align-items: center; align-self: flex-end; gap: 5px; width: 128px; height: 30px; padding: 8px 0 0 5px; background: var(--frame); border-radius: 0 0 6px 6px; font-weight: bold; white-space: nowrap; }
.thumb1 { width: 12px; height: 12px; background: #111; }
.thumb2 { width: 38px; height: 12px; background: linear-gradient(#0000 7px, #8fe08a 7px 8px, #0000 8px) 12px 0 / 22px no-repeat, #111; }

/* dock */
.dock { flex: 1; display: flex; justify-content: center; align-items: flex-end; padding: 0 0 2px 4px; background: linear-gradient(#0008, #0000 30px); }
.shelf { display: flex; align-items: flex-start; gap: 5px; padding: 0 16px; height: 37px; background: linear-gradient(#0000 12px, #a9c6cb 12px, #c8dadc 35px, #f0f6f6 35px); clip-path: polygon(0 100%, 12px 12px, 12px 0, calc(100% - 12px) 0, calc(100% - 12px) 12px, 100% 100%); }
.shelf svg { width: 28px; height: 30px; }
.shelf .rule { width: 12px; }
```
FILE: app.js
```js
const BARS = 172;
const pct = bars => (bars / BARS * 100).toFixed(3) + '%';
const $ = id => document.getElementById(id);
const use = id => `<svg viewBox="0 0 13 13"><use href="#i-${id}"/></svg>`;
const pick = (text, cls = '') => `<span class="pick ${cls}"><select aria-label="${text}"><option>${text}</option></select></span>`;

/* browser list */
const effects = ['Amp', 'Audio Effect Rack', 'Auto Filter', 'Auto Pan', 'Beat Repeat', 'Cabinet', 'Chorus', 'Compressor', 'Corpus', 'Dynamic Tube', 'EQ Eight', 'EQ Three', 'Erosion', 'External Audio Effect', 'Filter Delay', 'Flanger', 'Frequency Shifter', 'Gate', 'Glue Compressor', 'Grain Delay', 'Limiter', 'Looper', 'Multiband Dynamics', 'Overdrive', 'Phaser', 'Ping Pong Delay', 'Redux', 'Resonators', 'Reverb', 'Saturator', 'Simple Delay', 'Spectrum', 'Utility', ''];
$('effects').innerHTML = effects.map((n, i) => `<li${i === 2 ? ' class="sel"' : ''}><svg class="tri" viewBox="0 0 6 8"><path d="M.5.500l5 3.500-5 3.500z"/></svg><i class="box"></i>${n}</li>`).join('');

/* bar and time rulers */
let out = '';
for (let b = 0; b < BARS; b += 4) out += b % 8 ? `<i style="left:${pct(b)}"></i>` : `<span style="left:${pct(b)}">${b + 1}</span>`;
$('bars').innerHTML = out;
const BAR_SEC = 240 / 130;
out = '<i class="insert"></i>';
for (let s = 0; s < BARS * BAR_SEC; s += 5) {
  const left = pct(s / BAR_SEC);
  out += s % 20 ? `<i style="left:${left}"></i>` : `<span style="left:${left}">${Math.floor(s / 60)}:${String(s % 60).padStart(2, '0')}</span>`;
}
$('seconds').innerHTML = out;

/* overview: [from, to, y, height, colour, clip length] */
const R = '#aa3545', D = '#861c1c', P = '#4a1560', V = '#6f2a8f', L = '#b894cc', G = '#12a050', O = '#7d6b10', T = '#256a68', N = '#8a8d90';
const strips = [
  [0, 8, 1, 1, '#c0a030', .5], [0, 16, 3, 1, '#7a86a8', 2], [16, 18, 3, 1, '#20305a'], [18, 24, 3, 1, '#7a86a8', 2], [0, 24, 4, 1, O, 2], [1, 23, 5, 1, '#4a7a68', 1], [8, 24, 2, 1, '#20a898', .5],
  [0, 8, 9, 1, O, 2], [8, 16, 7, 1, R], [8, 16, 9, 1, O, 2], [16, 24, 7, 3, '#8a5a18', 2], [8, 24, 10, 1, G, 99],
  [24, 31, 10, 1, P], [24, 55.4, 12, 1, R], [24, 32, 22, 1, R], [32, 48, 7, 1, R, 4], [32, 48, 21, 3, R], [40, 48, 20, 4, R], [32, 48, 38, 1, R],
  [48, 56, 21, 1, R], [48, 104, 25, 1, D], [56, 96, 18, 1, R, 4], [56, 60, 18, 2, R], [72, 76, 18, 2, R], [56, 96, 26, 1, N, .4], [56, 96, 28, 1, R, 4], [64, 88, 30, 1, R, 4], [72, 88, 32, 2, P],
  [58, 60, 34, 1, N], [62, 72, 34, 1, N, 2], [72, 96, 34, 1, '#aaa', 2], [48, 52, 37, 1, V], [52, 55.4, 37, 1, L], [56, 60, 37, 1, V], [60, 64, 37, 1, L], [56, 58, 36, 1, T], [88, 90, 36, 1, T],
  [48, 55.4, 39, 1, R], [52, 55.4, 39, 2, R], [50.4, 55.4, 41, 1, T], [80.5, 84.5, 37, 1, V], [84.5, 88, 37, 1, L], [88, 92, 37, 1, V], [92, 96, 37, 1, L], [80, 88, 42, 1, P],
  [88, 104, 23, 1, R], [96, 112, 10, 1, G, 99], [96, 112, 29, 1, R], [96, 112, 38, 1, R], [96, 128, 43, 1, R], [104, 112, 43, 2, R], [104, 136, 12, 1, R], [104, 112, 22, 2, R],
  [112, 128, 7, 1, R, 4], [112, 119, 10, 1, P], [112, 128, 21, 3, R], [128, 136, 25, 1, D], [128, 132, 37, 1, V], [132, 135.5, 37, 1, L], [128, 136, 39, 1, R], [148, 164, 22, 2, R], [156, 164, 20, 1, R], [156, 164, 22, 3, R]
];
let map = '';
strips.forEach(([a, b, y, h, c, step = 8]) => {
  for (let s = a; s < b; s += step) map += `<rect x="${s}" y="${y}" width="${Math.min(step, b - s) - (step < 1 ? .2 : .15)}" height="${h}" fill="${c}"/>`;
});
$('overview').innerHTML = map + '<rect x="83.9" width=".2" height="45"/>';

/* MIDI note shapes: flat lists of [from, to, y] in grid units, 18 units to a bar */
const phraseA = [[17, 34, 22], [34, 54, 19], [54, 71, 22], [88, 108, 22], [0, 17, 27], [108, 124, 27], [73, 87, 31, 1], [125, 142, 31, 1], [120, 142, 34], [32, 34, 39], [73, 119, 39], [0, 32, 42], [35, 71, 42], [108, 142, 42], [49, 71, 46, 1], [0, 34, 47], [104, 108, 47], [49, 71, 51, 1], [34, 49, 54], [120, 142, 54], [0, 34, 59], [62, 71, 59], [0, 61, 62], [73, 98, 62], [73, 142, 66, 1], [98, 142, 71, 1], [73, 98, 74], [0, 71, 79]];
const phraseB = [[36, 53, 19], [19, 36, 23], [53, 73, 23], [91, 107, 23], [0, 18, 28, 1], [108, 126, 28, 1], [74, 90, 32], [123, 144, 36], [32, 36, 41], [74, 122, 41], [0, 31, 45], [36, 73, 45], [108, 144, 45], [51, 73, 49], [0, 36, 51, 1], [104, 106, 51, 1], [51, 73, 54], [36, 51, 58], [123, 144, 58], [0, 36, 63], [64, 73, 63], [0, 63, 67], [74, 100, 67], [74, 144, 71], [101, 144, 76], [74, 100, 80], [0, 73, 84, 1]];
const phraseC = [[36, 46, 19], [69, 74, 19], [108, 118, 19], [140, 144, 19], [19, 26, 23, 1], [36, 53, 23, 1], [91, 100, 23, 1], [19, 36, 26, 1], [56, 73, 26, 1], [80, 90, 26, 1], [102, 107, 26, 1], [117, 127, 26, 1], [0, 19, 31], [53, 60, 31], [69, 80, 31], [127, 131, 31], [133, 139, 34], [32, 63, 42], [108, 144, 42], [0, 107, 45], [127, 144, 45], [24, 36, 48], [49, 73, 48], [98, 107, 48], [0, 36, 49, 1], [24, 36, 53], [49, 73, 53], [98, 107, 53], [19, 24, 56], [37, 48, 56], [91, 97, 56], [0, 36, 60, 1], [63, 90, 60, 1], [0, 121, 63, 1], [36, 73, 66, 1], [108, 121, 66, 1], [49, 73, 71, 1], [124, 144, 71, 1], [37, 48, 74, 1], [108, 119, 74, 1], [0, 107, 79]];
const phraseD = [[0, 11, 22, 1], [11, 22, 20, 1], [33, 43, 17, 1], [22, 35, 21, 1], [43, 58, 21, 1], [58, 71, 23, 1], [0, 33, 26, 1], [35, 69, 25, 1], [22, 35, 28, 1], [13, 33, 30, 1], [0, 22, 32, 1], [53, 55, 28, 1], [33, 53, 33, 1]];
const notes = (phrase, starts, h) => `<svg viewBox="0 0 ${BARS} ${h}" preserveAspectRatio="none"><path fill="#2f3048" d="${starts.map(s => phrase.map(([a, b, y, t]) => `M${(s + a / 18).toFixed(2)} ${y - 1}h${((b - a) / 18).toFixed(2)}v${t || 2}H${(s + a / 18).toFixed(2)}z`).join('')).join('')}"/></svg>`;

const clip = (a, b, cls, text = '') => `<div class="clip ${cls}" style="left:${pct(a)};width:${pct(b - a)}">${text}</div>`;
const run = (from, to, step, cls, text) => { let s = ''; for (let b = from; b < to; b += step) s += clip(b, b + step, cls, text); return s; };
const clips = (list, cls, text) => list.map(([a, b]) => clip(a, b, cls, text)).join('');
const dash = y => `<i class="dash" style="top:${y}px"></i>`;

const rise = b => `C${b + 3} 54 ${b + 5} 49 ${b + 6} 38L${b + 8} 18`;
const envelope = `M0 63H32${rise(32)}H88V63${rise(88)}V63${rise(96)}H112V63M112 18Q122 58 129 84L148 18V63${rise(148)}H164V63H168V18H172`;
const points = [[32, 63], [40, 18], [88, 18], [88, 63], [96, 18], [96, 63], [104, 18], [112, 18], [112, 63], [129, 84], [148, 18], [148, 63], [156, 18], [164, 18], [164, 63], [168, 63], [168, 18]].map(p => `M${p[0]} ${p[1]}h.01`).join('');
const automation = `<svg class="auto" viewBox="0 0 ${BARS} 85" preserveAspectRatio="none"><path d="${envelope}" stroke="#f00" stroke-width="2"/><path d="${points}" stroke="#f00" stroke-width="6"/><path d="${points}" stroke="#fff" stroke-width="2"/></svg>`;

const stutter = b => [[b, b + 1], [b + 2, b + 3], [b + 4, b + 5], [b + 6, b + 7], [b + 8, b + 12], [b + 12, b + 16]];
const full = dev => ({ io: 'full', picks: dev, size: 'tall' });
const tracks = [
  { n: '', no: '', size: 'sliver', midi: 1, lane: clips([[32, 40], [40, 48], [48, 56], [112, 120], [120, 128]], 'pink') },
  { n: '23 Kontakt 5', no: 23, cls: 'hot', midi: 1, vol: '0', fill: 83, ...full(['EQ Eight', '1 Frequency A']), lane: clips([[24, 32], [32, 48], [104, 112], [112, 128], [148, 164]], 'pink') + notes(phraseA, [24, 32, 40, 104, 112, 120, 148, 156], 85) + dash(71) },
  { n: '24 Kontakt 5', no: 24, midi: 1, vol: '0', fill: 83, armed: 1, ...full(['Auto Filter', 'Frequency']), lane: clips([[32, 48], [88, 96], [96, 112], [112, 128], [148, 164]], 'pink') + notes(phraseB, [32, 40, 88, 96, 104, 112, 120, 148, 156], 85) + automation },
  { n: '25 Kontakt 5', no: 25, off: 1, midi: 1, lane: clips([...stutter(32), ...stutter(148)], 'pink') },
  { n: 'Sidechain', no: 26, off: 1, lane: run(48, 104, 8, 'orange', 'Sidechain') + clip(128, 136, 'orange', 'Sidechain') },
  { n: 'Kick', no: 27, lane: clip(56, 96, 'kick') },
  { n: '28 Audio', no: 28, lane: '' },
  { n: '29 Sylenth1', no: 29, midi: 1, lane: run(56, 96, 4, 'pink') },
  { n: '30 Kontakt 5', no: 30, midi: 1, vol: '-8.6', fill: 64, ...full(['Mixer', 'Speaker On']), lane: run(96, 112, 4, 'pink') + notes(phraseC, [96, 104], 85) + dash(33) + '<i class="cursor"></i>' },
  { n: '31 Nexus', no: 31, midi: 1, vol: '-11.4', fill: 55, io: 'short', picks: ['Track Volume'], size: 'mid', lane: run(64, 88, 4, 'pink') + notes(phraseD, [64, 68, 72, 76, 80, 84], 34) + dash(24) },
  { n: '32 Group', no: 32, cls: 'group', lane: clip(72, 88, 'plum') },
  { n: '35 Audio', no: 35, lane: clips([[58, 60], [62, 64]], 'grey', 'VEE2') + run(64, 96, 4, 'grey', 'VEE2') },
  { n: '36 Audio', no: 36, lane: clip(71, 72, 'kick') },
  { n: '37 Audio', no: 37, lane: clips([[56, 58], [88, 90]], 'blue', 'ME') },
  { n: '38 Audio', no: 38, size: 'cut', lane: clips([[48, 55.5], [56, 64], [80.5, 88], [88, 96], [128, 135.5]], 'violet', 'Ambient Noise') },
  { n: 'Master', cls: 'master', size: 'tall', picks: ['Mixer', 'Track Volume'], lane: dash(12) + '<span class="zoomlevel">4/1</span>' }
];
const pan = '<span class="panwrap"><input class="val" value="C" aria-label="Pan"></span>';
const volume = (v, f, tint = '') => `<input class="val" style="--fill:${f}%${tint}" value="${v}" aria-label="Volume">`;

$('tracks').innerHTML = tracks.map(t => {
  const picks = (t.picks || []).map(p => pick(p, t.armed ? 'armed' : '')).join('');
  const plus = t.size === 'tall' ? `<button class="dot plus" aria-label="Add lane"><svg viewBox="0 0 11 11"><path d="M5.500 2.500v6M2.500 5.500h6" stroke="#111"/></svg></button>` : '';
  const master = t.n === 'Master';
  let io = '<div class="blank"></div>';
  if (t.io === 'full') io = pick('All Ins') + pick('All Channels', 'chan') + '<div class="monitor"><button>In</button><button class="lit">Auto</button><button>Off</button></div>' + pick('Master') + io;
  if (t.io === 'short') io = pick('Master') + io;
  if (master) io = pick('1/2', 'out') + pick('1/2', 'out');
  const arm = t.cls === 'group' ? '' : `<button aria-label="Arm">${t.midi ? use('tie') : '<svg viewBox="0 0 13 13"><circle cx="6.500" cy="6.500" r="4.200"/></svg>'}</button>`;
  let mix = `<button class="act ${t.off ? '' : 'lit'}">${t.no}</button><button class="solo">${t.no ? 'S' : ''}</button>${arm}`;
  if (t.vol) mix += volume(t.vol, t.fill) + pan;
  if (t.io === 'full') mix += '<span class="peak">-inf</span><span class="peak">-inf</span>';
  if (master) mix = volume('0', 83) + volume('0', 83, ';--tint:#45c0ff') + '<span class="spacer"></span>' + pan;
  return `<div class="track ${t.size || ''} ${t.cls || ''}">
    <div class="lane striped">${t.lane}</div>
    <div class="name"><header><button class="dot" aria-label="Fold">${use(t.picks ? 'down' : 'right')}</button>${t.n}</header>${picks}${plus}</div>
    <div class="io">${io}</div>
    <div class="mix"><div class="mixgrid">${mix}</div><div class="level"></div></div>
  </div>`;
}).join('');

/* EQ curve */
const gx = f => (68.3 + 130 * Math.log10(f / 100)).toFixed(1);
let eq = '';
[50, 60, 70, 80, 90, 200, 300, 400, 500, 600, 700, 800, 900, 2000, 3000, 4000, 5000, 6000, 7000, 8000, 9000, 20000].forEach(f => eq += `<path d="M${gx(f)} 0V134" stroke="#4c4c4c" stroke-dasharray="1 1"/>`);
[100, 1000, 10000].forEach(f => eq += `<path d="M${gx(f)} 0V122" stroke="#4c4c4c"/>`);
[[12, 14], [6, 40], [0, 66], [-6, 93], [-12, 119]].forEach(([v, y]) => eq += `<text x="17" y="${y + 4}" text-anchor="end">${String(v).replace('-', '−')}</text><path d="M22 ${y + .5}H374" stroke="#4c4c4c" ${v ? 'stroke-dasharray="1 1"' : ''}/>`);
[[100, '100'], [1000, '1K'], [10000, '10K']].forEach(([f, t]) => eq += `<text x="${gx(f)}" y="132" text-anchor="middle">${t}</text>`);
eq += '<path d="M55 134C60 105 64 72 76 68Q79 67 86 67H374" fill="none" stroke="#e86a10" stroke-width="2"/>';
eq += '<circle cx="72.500" cy="81.500" r="6.500" fill="#0f0"/><text x="72.500" y="85" text-anchor="middle" style="fill:#063">1</text>';
[[110, 2], [198, 3], [286, 4]].forEach(([x, n]) => eq += `<circle cx="${x}" cy="67" r="5.500" fill="#141414" fill-opacity=".6" stroke="#0f0" stroke-width="2"/><text x="${x}" y="70" text-anchor="middle" style="fill:#0c0;font-size:9px">${n}</text>`);
$('curve').innerHTML = eq;

const bell = 'M1 5.500h4c2-5 8-5 10 0h4M5 5.500c2 5 8 5 10 0';
const shapes = ['M2 9V3.500q0-1 1-1h13', bell, bell, 'M1 5.500h7c2 0 2-3.500 5-3.500h4M8 5.500c2 0 2 3.500 5 3.500h4', bell, bell, bell, 'M1 3h11q2 0 2 2v4'];
$('bands').innerHTML = shapes.map((d, i) => `<div class="band ${i ? '' : 'first'} ${i > 3 ? 'idle' : ''}"><span class="pick"><select aria-label="Filter ${i + 1} type"></select><svg viewBox="0 0 20 11"><path d="${d}" fill="none" stroke="#111"/>${i ? '' : '<text x="8" y="10" font-size="7">x4</text>'}</svg></span><label><input type="checkbox" ${i < 4 ? 'checked' : ''}>${i + 1}</label></div>`).join('');
```
